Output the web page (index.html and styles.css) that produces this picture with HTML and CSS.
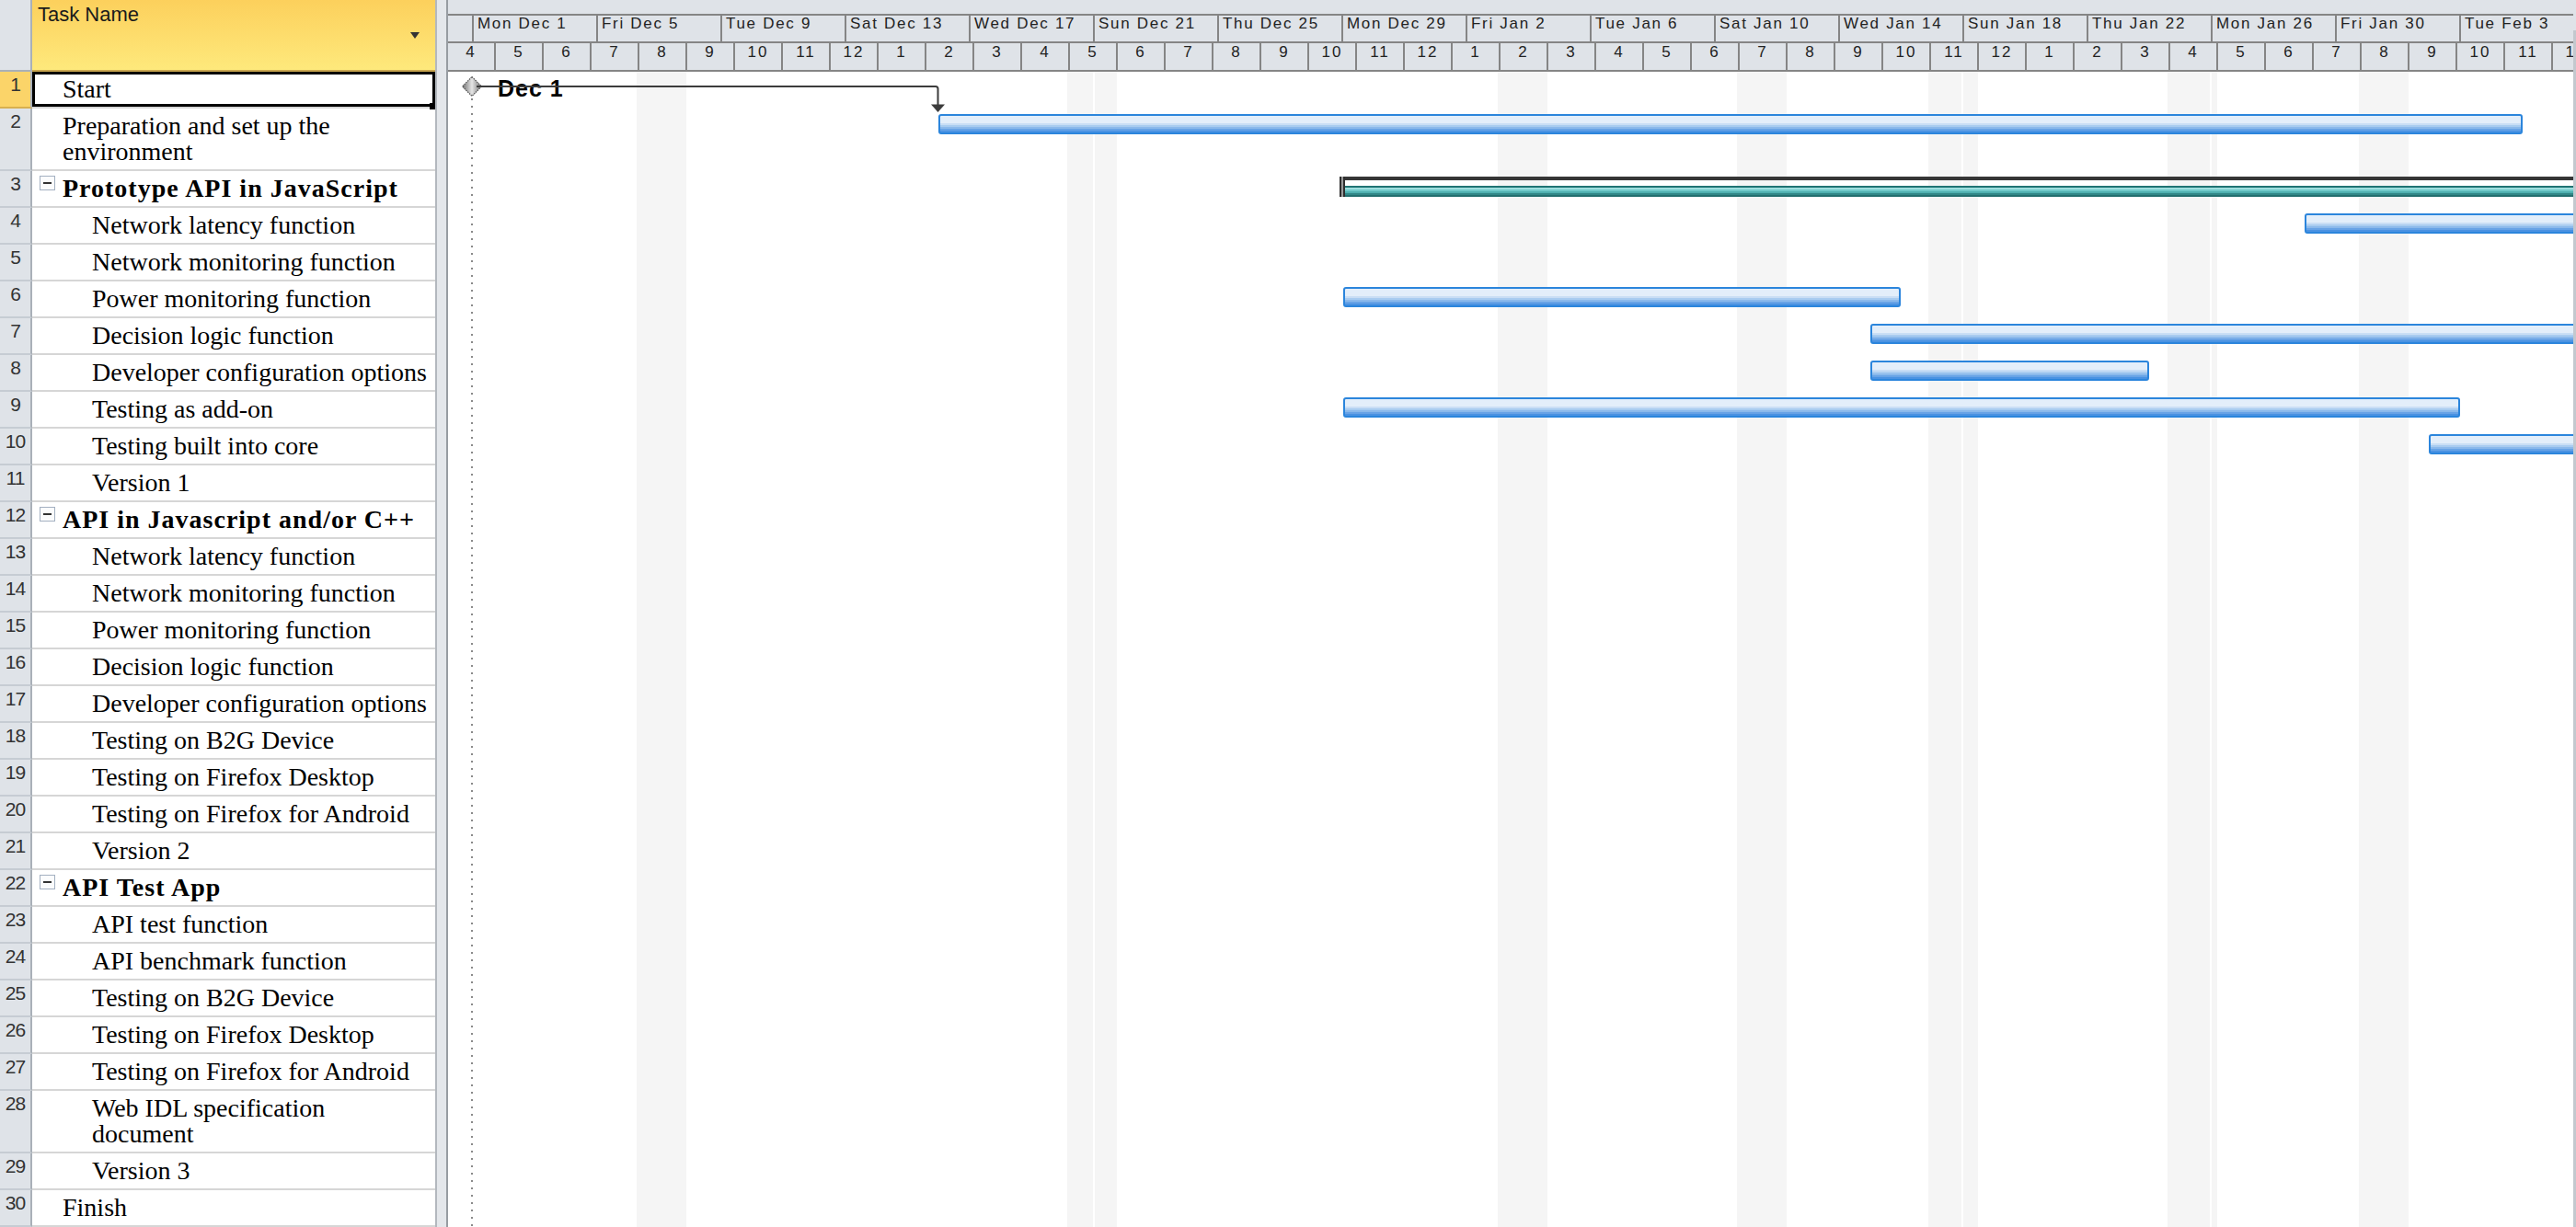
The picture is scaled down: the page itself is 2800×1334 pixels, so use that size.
FILE: index.html
```html
<!DOCTYPE html>
<html>
<head>
<meta charset="utf-8">
<title>Gantt Chart</title>
<link rel="stylesheet" href="styles.css">
</head>
<body>
<div class="app">
  <div class="sheet">
    <div class="sheet-head">
      <div class="rn-head"></div>
      <div class="name-head"><span class="hd-text">Task Name</span><span class="dd"></span></div>
    </div>
    <div class="sheet-body">
      <div class="row sel"><div class="rn">1</div><div class="name selected">Start</div></div>
      <div class="row tall"><div class="rn">2</div><div class="name">Preparation and set up the<br>environment</div></div>
      <div class="row"><div class="rn">3</div><div class="name sum"><span class="ob"></span>Prototype API in JavaScript</div></div>
      <div class="row"><div class="rn">4</div><div class="name l2">Network latency function</div></div>
      <div class="row"><div class="rn">5</div><div class="name l2">Network monitoring function</div></div>
      <div class="row"><div class="rn">6</div><div class="name l2">Power monitoring function</div></div>
      <div class="row"><div class="rn">7</div><div class="name l2">Decision logic function</div></div>
      <div class="row"><div class="rn">8</div><div class="name l2">Developer configuration options</div></div>
      <div class="row"><div class="rn">9</div><div class="name l2">Testing as add-on</div></div>
      <div class="row"><div class="rn">10</div><div class="name l2">Testing built into core</div></div>
      <div class="row"><div class="rn">11</div><div class="name l2">Version 1</div></div>
      <div class="row"><div class="rn">12</div><div class="name sum"><span class="ob"></span>API in Javascript and/or C++</div></div>
      <div class="row"><div class="rn">13</div><div class="name l2">Network latency function</div></div>
      <div class="row"><div class="rn">14</div><div class="name l2">Network monitoring function</div></div>
      <div class="row"><div class="rn">15</div><div class="name l2">Power monitoring function</div></div>
      <div class="row"><div class="rn">16</div><div class="name l2">Decision logic function</div></div>
      <div class="row"><div class="rn">17</div><div class="name l2">Developer configuration options</div></div>
      <div class="row"><div class="rn">18</div><div class="name l2">Testing on B2G Device</div></div>
      <div class="row"><div class="rn">19</div><div class="name l2">Testing on Firefox Desktop</div></div>
      <div class="row"><div class="rn">20</div><div class="name l2">Testing on Firefox for Android</div></div>
      <div class="row"><div class="rn">21</div><div class="name l2">Version 2</div></div>
      <div class="row"><div class="rn">22</div><div class="name sum"><span class="ob"></span>API Test App</div></div>
      <div class="row"><div class="rn">23</div><div class="name l2">API test function</div></div>
      <div class="row"><div class="rn">24</div><div class="name l2">API benchmark function</div></div>
      <div class="row"><div class="rn">25</div><div class="name l2">Testing on B2G Device</div></div>
      <div class="row"><div class="rn">26</div><div class="name l2">Testing on Firefox Desktop</div></div>
      <div class="row"><div class="rn">27</div><div class="name l2">Testing on Firefox for Android</div></div>
      <div class="row tall"><div class="rn">28</div><div class="name l2">Web IDL specification<br>document</div></div>
      <div class="row"><div class="rn">29</div><div class="name l2">Version 3</div></div>
      <div class="row"><div class="rn">30</div><div class="name">Finish</div></div>
    </div>
  </div>
  <div class="splitter"></div>
  <div class="chart">
    <div class="chart-main">
      <div class="ts">
        <div class="ts-top"></div>
        <div class="tier t1">
          <div class="c"></div><div class="c">Mon Dec 1</div><div class="c">Fri Dec 5</div><div class="c">Tue Dec 9</div><div class="c">Sat Dec 13</div><div class="c">Wed Dec 17</div><div class="c">Sun Dec 21</div><div class="c">Thu Dec 25</div><div class="c">Mon Dec 29</div><div class="c">Fri Jan 2</div><div class="c">Tue Jan 6</div><div class="c">Sat Jan 10</div><div class="c">Wed Jan 14</div><div class="c">Sun Jan 18</div><div class="c">Thu Jan 22</div><div class="c">Mon Jan 26</div><div class="c">Fri Jan 30</div><div class="c">Tue Feb 3</div>
        </div>
        <div class="tier t2">
          <div class="c">4</div><div class="c">5</div><div class="c">6</div><div class="c">7</div><div class="c">8</div><div class="c">9</div><div class="c">10</div><div class="c">11</div><div class="c">12</div><div class="c">1</div><div class="c">2</div><div class="c">3</div>
          <div class="c">4</div><div class="c">5</div><div class="c">6</div><div class="c">7</div><div class="c">8</div><div class="c">9</div><div class="c">10</div><div class="c">11</div><div class="c">12</div><div class="c">1</div><div class="c">2</div><div class="c">3</div>
          <div class="c">4</div><div class="c">5</div><div class="c">6</div><div class="c">7</div><div class="c">8</div><div class="c">9</div><div class="c">10</div><div class="c">11</div><div class="c">12</div><div class="c">1</div><div class="c">2</div><div class="c">3</div>
          <div class="c">4</div><div class="c">5</div><div class="c">6</div><div class="c">7</div><div class="c">8</div><div class="c">9</div><div class="c">10</div><div class="c">11</div><div class="c">12</div>
        </div>
      </div>
      <div class="cbody">
        <div class="band" style="left:205px;width:54px"></div>
        <div class="band" style="left:673px;width:28px"></div>
        <div class="band" style="left:703px;width:24px"></div>
        <div class="band" style="left:1141px;width:54px"></div>
        <div class="band" style="left:1401px;width:54px"></div>
        <div class="band" style="left:1609px;width:36px"></div>
        <div class="band" style="left:1647px;width:16px"></div>
        <div class="band" style="left:1869px;width:46px"></div>
        <div class="band" style="left:1917px;width:6px"></div>
        <div class="band" style="left:2077px;width:54px"></div>
        <div class="startline"></div>

        <div class="crow">
          <span class="ms-label">Dec 1</span>
          <svg class="ms" width="560" height="50" viewBox="0 0 560 50">
            <defs>
              <linearGradient id="dg" x1="0" y1="0" x2="1" y2="0">
                <stop offset="0" stop-color="#6e6e6e"/>
                <stop offset="0.5" stop-color="#e6e6e6"/>
                <stop offset="1" stop-color="#6e6e6e"/>
              </linearGradient>
            </defs>
            <polygon points="26,5.5 36.5,16 26,26.5 15.5,16" fill="url(#dg)" stroke="#505050" stroke-width="1.2" stroke-dasharray="1.5 1"/>
            <path d="M31 16 H530 Q532.5 16 532.5 18.5 V37" fill="none" stroke="#3c3c3c" stroke-width="2"/>
            <polygon points="525,35.5 540,35.5 532.5,44" fill="#3c3c3c"/>
          </svg>
        </div>
        <div class="crow tall"><div class="bar" style="left:533px;width:1722px"></div></div>
        <div class="crow">
          <div class="summary" style="left:969px;width:1400px">
            <div class="sum-top"></div><div class="sum-cap"></div><div class="sum-bar"></div>
          </div>
        </div>
        <div class="crow"><div class="bar" style="left:2018px;width:500px"></div></div>
        <div class="crow"></div>
        <div class="crow"><div class="bar" style="left:973px;width:606px"></div></div>
        <div class="crow"><div class="bar" style="left:1546px;width:800px"></div></div>
        <div class="crow"><div class="bar" style="left:1546px;width:303px"></div></div>
        <div class="crow"><div class="bar" style="left:973px;width:1214px"></div></div>
        <div class="crow"><div class="bar" style="left:2153px;width:500px"></div></div>
        <div class="crow"></div>
        <div class="crow"></div>
        <div class="crow"></div>
        <div class="crow"></div>
        <div class="crow"></div>
        <div class="crow"></div>
        <div class="crow"></div>
        <div class="crow"></div>
        <div class="crow"></div>
        <div class="crow"></div>
        <div class="crow"></div>
        <div class="crow"></div>
        <div class="crow"></div>
        <div class="crow"></div>
        <div class="crow"></div>
        <div class="crow"></div>
        <div class="crow"></div>
        <div class="crow tall"></div>
        <div class="crow"></div>
        <div class="crow"></div>
      </div>
    </div>
    <div class="vscroll"></div>
  </div>
</div>
</body>
</html>
```

FILE: styles.css
```css
* { box-sizing: border-box; }
html, body { margin: 0; padding: 0; }
body { width: 2800px; height: 1334px; overflow: hidden; background: #fff; }

.app { display: flex; width: 2800px; height: 1334px; overflow: hidden; }

/* ---------- left sheet ---------- */
.sheet { width: 473px; flex: none; display: flex; flex-direction: column; }
.sheet-head { display: flex; height: 78px; flex: none; }
.rn-head {
  width: 35px; flex: none; background: #dfe3e8;
  border-right: 2px solid #a9b0b8; border-bottom: 2px solid #a9b0b8;
}
.name-head {
  flex: 1; display: flex; justify-content: space-between; align-items: flex-start;
  padding: 5px 17px 0 6px;
  background: linear-gradient(#fcd05c, #fee97c);
  border-bottom: 2px solid #c9a650;
  font: 22px/22px "Liberation Sans", Arial, sans-serif; color: #1b1b1b;
}
.hd-text { white-space: nowrap; }
.dd {
  flex: none; width: 0; height: 0; margin-top: 30px;
  border-left: 5px solid transparent; border-right: 5px solid transparent;
  border-top: 7px solid #333;
}

.row { display: flex; height: 40px; }
.row.tall { height: 68px; }
.rn {
  width: 35px; flex: none; background: #dfe3e8;
  border-right: 2px solid #a9b0b8; border-bottom: 2px solid #c6ccd3;
  text-align: center; color: #333;
  font: 21px/28px "Liberation Sans", Arial, sans-serif; letter-spacing: -1px;
}
.sel .rn { background: #fbd469; border-bottom-color: #d8b050; }
.name {
  flex: 1; position: relative; white-space: nowrap;
  border-bottom: 2px solid #d6d6d6;
  padding: 5px 0 0 33px;
  font: 28px/28px "Liberation Serif", "Times New Roman", serif; color: #000;
}
.name.l2 { padding-left: 65px; }
.name.sum {
  display: flex; align-items: flex-start;
  padding-left: 8px; font-weight: bold; letter-spacing: 1px;
}
.ob {
  position: relative; flex: none; width: 17px; height: 16px; margin-right: 8px;
  border: 1px solid #a3b0c1; background: #fbfcfd;
}
.ob::before {
  content: ""; position: absolute; left: 3px; top: 6px; width: 9px; height: 2px; background: #333;
}
.name.selected { box-shadow: inset 0 0 0 3px #000; z-index: 2; }
.name.selected::after {
  content: ""; position: absolute; right: 0; bottom: -3px; width: 6px; height: 7px; background: #000;
}

/* ---------- splitter ---------- */
.splitter {
  width: 14px; flex: none; background: #e4e7eb;
  border-left: 2px solid #b3b8be; border-right: 2px solid #979ca2;
}

/* ---------- chart ---------- */
.chart { flex: 1; min-width: 0; display: flex; }
.chart-main { flex: 1; min-width: 0; overflow: hidden; display: flex; flex-direction: column; }
.vscroll { width: 3px; flex: none; background: linear-gradient(#dfe3e8 0 33px, #c3c8ce 33px); }

.ts {
  flex: none; background: #dfe3e8; color: #222;
  font: 17px/18px "Liberation Sans", Arial, sans-serif; letter-spacing: 1.7px;
}
.ts-top { height: 17px; border-bottom: 2px solid #858585; }
.tier { display: flex; border-bottom: 2px solid #858585; }
.t1 { height: 30px; margin-left: -109px; }
.t2 { height: 31px; margin-left: -2px; }
.t1 .c {
  flex: none; width: 135px; border-left: 2px solid #858585;
  padding-left: 4px; white-space: nowrap; overflow: hidden;
}
.t2 .c {
  flex: none; width: 52px; border-left: 2px solid #858585;
  padding-top: 1px; text-align: center; letter-spacing: 2px;
}

.cbody { flex: 1; position: relative; }
.band { position: absolute; top: 0; bottom: 0; background: #f5f5f5; }
.startline {
  position: absolute; left: 25px; top: 29px; bottom: 0; width: 2px;
  background: repeating-linear-gradient(#8a8a8a 0 2px, transparent 2px 8px);
}

.crow { position: relative; height: 40px; }
.crow.tall { height: 68px; }

.ms-label {
  position: absolute; left: 54px; top: 6px;
  font: bold 25px/25px "Liberation Sans", Arial, sans-serif; letter-spacing: 1px; color: #000;
}
.ms { position: absolute; left: 0; top: 0; overflow: visible; }

.bar {
  position: absolute; top: 6px; height: 22px;
  border: 2px solid #2b85dc; border-radius: 3px;
  background: linear-gradient(#e3eefa 0 44%, #c9def5 44% 55%, #a9ccf0 55% 66%, #8bb9eb 66% 77%, #68a3e6 77% 88%, #4a92e2 88% 100%);
}

.summary { position: absolute; top: 6px; height: 22px; }
.sum-top { position: absolute; left: 0; right: 0; top: 0; height: 4px; background: #363636; }
.sum-cap {
  position: absolute; left: 0; top: 0; width: 6px; height: 22px;
  background: linear-gradient(90deg, #2e2e2e 0 2px, #9a9a9a 2px 4px, #2e2e2e 4px);
}
.sum-bar {
  position: absolute; left: 6px; right: 0; top: 10px; height: 12px;
  background: linear-gradient(#1f7373 0 2px, #9fdede 2px 4px, #72caca 4px 6px, #4fb0b0 6px 8px, #318888 8px 10px, #236f6f 10px 12px);
}
```
